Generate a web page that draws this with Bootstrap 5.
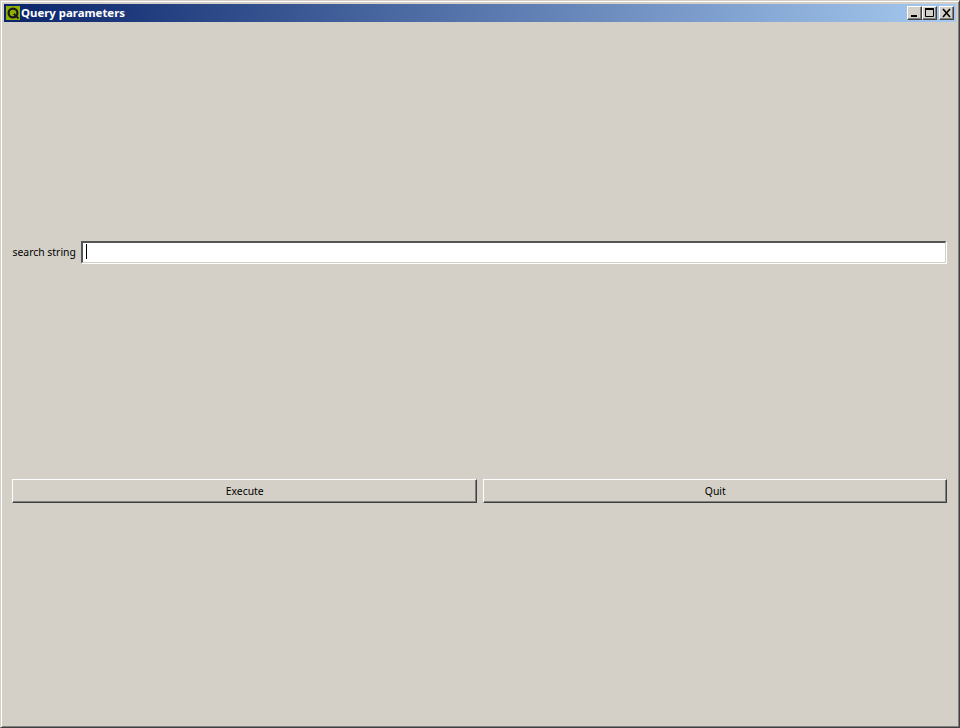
<!DOCTYPE html>
<html lang="en">
  <head>
    <meta charset="UTF-8" />
    <meta name="viewport" content="width=device-width, initial-scale=1.0" />
    <title>Query parameters</title>
    <link
      href="https://cdn.jsdelivr.net/npm/bootstrap@5.3.3/dist/css/bootstrap.min.css"
      rel="stylesheet"
    />
    <style>
      html,
      body {
        height: 100%;
      }

      body {
        background: #d4d0c8;
        font-family: "Noto Sans", "Liberation Sans", sans-serif;
        font-size: 10.4px;
        color: #000;
        overflow: hidden;
      }

      .app-window {
        height: 728px;
        padding: 3px 2px 1px 2px;
        border: 1px solid;
        border-color: #d4d0c8 #404040 #404040 #d4d0c8;
        box-shadow: inset 1px 1px 0 #fff, inset -1px -1px 0 #808080;
      }

      .app-titlebar {
        height: 18px;
        margin: 0 1px;
        padding: 0 2px;
        background: linear-gradient(90deg, #0a246a, #a6caf0);
      }

      .app-title {
        font-weight: 700;
        font-size: 11.4px;
        line-height: 18px;
        color: #fff;
        margin-left: 1px;
      }

      .app-logo {
        width: 14px;
        height: 14px;
      }

      .win-btn {
        width: 15px;
        height: 14px;
        padding: 0;
        display: block;
        background: #d4d0c8;
        border: 1px solid;
        border-color: #fff #404040 #404040 #fff;
        box-shadow: inset -1px -1px 0 #808080;
      }

      .win-btn svg {
        display: block;
        width: 13px;
        height: 12px;
      }

      .win-close {
        margin-left: 2px;
      }

      .query-form {
        padding: 219px 10px 0 9px;
      }

      .field-label {
        width: 69px;
        padding-left: 0.5px;
        line-height: 22px;
        white-space: nowrap;
      }

      .field-box {
        margin-right: 1px;
      }

      .field-input {
        display: block;
        height: 22px;
        padding: 0 0 0 3px;
        background: #fff;
        border: 2px solid;
        border-color: #555 #d4d0c8 #d4d0c8 #555;
        border-right-width: 1px;
        border-bottom-width: 1px;
        box-shadow: 1px 1px 0 #fff;
        border-radius: 0;
        outline: none;
      }

      .caret-mark {
        width: 1px;
        height: 15px;
        background: #000;
        top: 3px;
        left: 5px;
      }

      .action-row {
        margin-top: 216px;
        gap: 6px;
      }

      .action-btn {
        height: 24px;
        padding: 2px 0 0 1px;
        background: #d4d0c8;
        border: 1px solid;
        border-color: #fff #404040 #404040 #fff;
        box-shadow: inset -1px -1px 0 #808080;
        border-radius: 0;
        color: #000;
      }
    </style>
  </head>
  <body>
    <div class="app-window d-flex flex-column">
      <div class="app-titlebar d-flex align-items-center">
        <svg class="app-logo flex-shrink-0" viewBox="0 0 14 14">
          <rect width="14" height="14" fill="#8fb000" />
          <circle cx="7" cy="7" r="4.4" fill="none" stroke="#1a1a1a" stroke-width="2.2" />
          <path d="M7 7l5.5 5.5" stroke="#1a1a1a" stroke-width="1.8" />
          <circle cx="7" cy="7" r="1.3" fill="#8fb000" />
        </svg>
        <span class="app-title flex-grow-1">Query parameters</span>
        <div class="d-flex">
          <span class="win-btn">
            <svg viewBox="0 0 13 12"><rect x="3" y="8" width="6" height="2" fill="#000" /></svg>
          </span>
          <span class="win-btn">
            <svg viewBox="0 0 13 12">
              <path d="M2.5 1.5h8v8h-8z" fill="none" stroke="#000" />
              <rect x="2" y="1" width="9" height="2" fill="#000" />
            </svg>
          </span>
          <span class="win-btn win-close">
            <svg viewBox="0 0 13 12"><path d="M3 2l7 8M10 2l-7 8" stroke="#000" stroke-width="1.6" /></svg>
          </span>
        </div>
      </div>

      <div class="query-form">
        <div class="d-flex">
          <label class="field-label flex-shrink-0">search string</label>
          <div class="field-box position-relative flex-grow-1">
            <input class="field-input w-100" type="text" />
            <span class="caret-mark position-absolute"></span>
          </div>
        </div>
        <div class="action-row d-flex">
          <button class="action-btn w-50" type="button">Execute</button>
          <button class="action-btn w-50" type="button">Quit</button>
        </div>
      </div>
    </div>

    <script src="https://cdn.jsdelivr.net/npm/bootstrap@5.3.3/dist/js/bootstrap.bundle.min.js"></script>
  </body>
</html>
